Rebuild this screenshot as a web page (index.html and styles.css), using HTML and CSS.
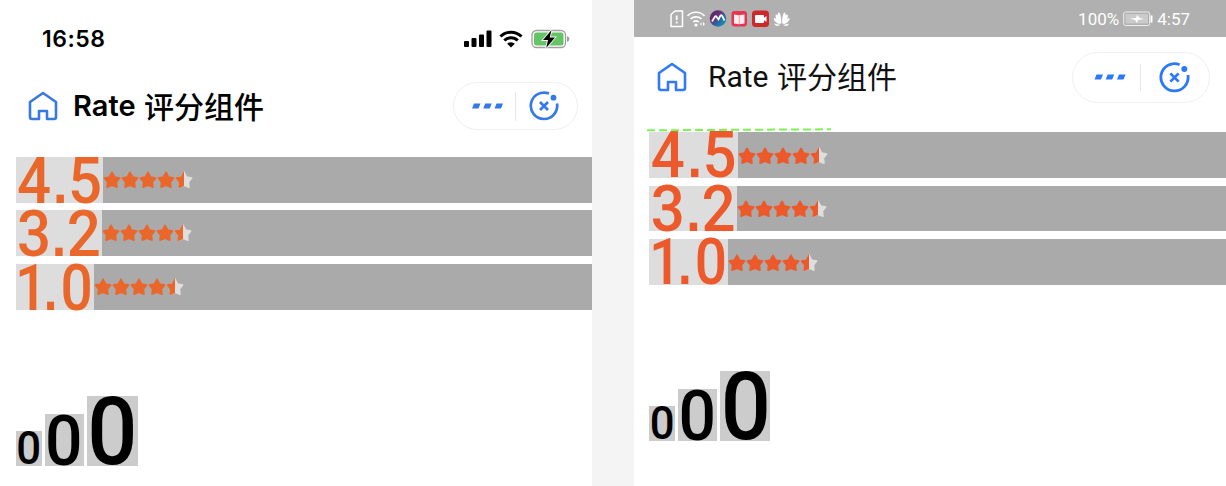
FILE: index.html
```html
<!DOCTYPE html>
<html lang="zh-CN">
<head>
<meta charset="utf-8">
<title>Rate 评分组件</title>
<link rel="stylesheet" href="styles.css">
</head>
<body>
<svg class="defs" aria-hidden="true">
  <defs>
    <symbol id="home" viewBox="0 0 30 30"><path d="M2 11 15 2l13 9V26q0 2-2 2h-7v-8h-8v8H4q-2 0-2-2z" fill="none" stroke="currentColor" stroke-width="2.600" stroke-linejoin="round"/></symbol>
    <symbol id="dots" viewBox="0 0 31 6"><path d="M2 .5h6.500l-2 5H0zM13.200 .5h6.500l-2 5h-6.500zM24.500 .5H31l-2 5h-6.500z" fill="currentColor"/></symbol>
    <symbol id="close" viewBox="0 0 30 30"><path d="M20 2.600A13.200 13.200 0 1 0 28 12.500M11 11l8 8M19 11l-8 8" fill="none" stroke="currentColor" stroke-width="2.700"/><circle cx="24.500" cy="6.700" r="2.900" fill="currentColor"/></symbol>
    <path id="star" d="M9 1.200 11.700 6 16.700 7 13.500 11 14 16.300 9 14.300 4 16.300 4.500 11 1.300 7 6.300 6z" stroke-width="1.500" stroke-linejoin="round"/>
    <clipPath id="half"><rect x="-1" y="-1" width="10" height="20"/></clipPath>
    <symbol id="stars" viewBox="0 0 90 18">
      <g fill="currentColor" stroke="currentColor"><use href="#star"/><use href="#star" x="18"/><use href="#star" x="36"/><use href="#star" x="54"/></g>
      <g transform="translate(72 0)"><use href="#star" fill="#dedede" stroke="#dedede"/><use href="#star" fill="currentColor" stroke="currentColor" clip-path="url(#half)"/></g>
    </symbol>
  </defs>
</svg>
<main class="compare">
  <section class="phone ios">
    <div class="status">
      <span class="time">16:58</span>
      <svg class="signal" viewBox="0 0 28 18"><rect y="11" width="5" height="6" rx="1"/><rect x="7.500" y="8" width="5" height="9" rx="1"/><rect x="15" y="4.500" width="5" height="12.500" rx="1"/><rect x="22.500" y=".5" width="5" height="16.500" rx="1"/></svg>
      <svg class="wifi" viewBox="0 0 24 18"><path d="M1.500 6.500a15 15 0 0 1 21 0M5.300 10.500a9.500 9.500 0 0 1 13.400 0" fill="none" stroke="#000" stroke-width="3.100"/><path d="M12 17.500 8.200 13.700a5.400 5.400 0 0 1 7.600 0z"/></svg>
      <svg class="battery" viewBox="0 0 39 20"><rect x="1" y="1.500" width="33.500" height="17" rx="4.500" fill="#fff" stroke="#a0a0a0" stroke-width="1.300"/><rect x="3" y="3.500" width="29.500" height="13" rx="2.500" fill="#65c466"/><path d="M36 7q2.500 1 2.500 3T36 13z" fill="#a0a0a0"/><path d="m20.500 1-8.500 10h5l-1.800 8L24 8.500h-5.200z" stroke="#fff" stroke-width="1.800" paint-order="stroke"/></svg>
    </div>
    <header class="bar">
      <svg class="home"><use href="#home"/></svg>
      <h1 class="title"><span class="latin">Rate</span><span class="han">评分组件</span></h1>
      <div class="capsule"><svg class="dots"><use href="#dots"/></svg><i class="divider"></i><svg class="close"><use href="#close"/></svg></div>
    </header>
    <div class="rates">
      <div class="rate"><svg class="score s45"><text transform="scale(.93 1)" x="1 39.800 56" y="45.500">4<tspan class="point">.</tspan>5</text></svg><svg class="stars"><use href="#stars"/></svg></div>
      <div class="rate"><svg class="score s32"><text transform="scale(.93 1)" x="1 38.500 54.500" y="45.500">3<tspan class="point">.</tspan>2</text></svg><svg class="stars"><use href="#stars"/></svg></div>
      <div class="rate"><svg class="score s10"><text transform="scale(.88 1)" x="-1 31.500 50.500" y="45.500">1<tspan class="point">.</tspan>0</text></svg><svg class="stars"><use href="#stars"/></svg></div>
    </div>
    <div class="zeros">
      <svg class="zero small"><text transform="scale(.93 1)" x="13.700" y="33">0</text></svg>
      <svg class="zero medium"><text transform="scale(.93 1)" x="20.200" y="51">0</text></svg>
      <svg class="zero large"><text transform="scale(.93 1)" x="27.200" y="68">0</text></svg>
    </div>
  </section>
  <section class="phone android">
    <div class="status">
      <svg class="notices" viewBox="0 0 124 20">
        <g fill="none" stroke="#fff"><path d="M2 5.500 6 2h7.500v15.500H2z" stroke-width="1.500" stroke-linejoin="round"/><path d="M7.700 6.500v4.500M7.700 12.500v2" stroke-width="1.800"/><path d="M18.500 6.800a12 12 0 0 1 17 0M21.500 10a8 8 0 0 1 11 0M24.300 13a4 4 0 0 1 5.400 0" stroke-width="1.700"/></g>
        <circle cx="27" cy="16" r="1.600" fill="#fff"/><path d="m32.500 13-1.500 2 1.500 2zm1.500 0 2 2-2 2z" fill="#fff"/>
        <linearGradient id="orb" x2="1" y2="1"><stop stop-color="#3f256c"/><stop offset=".4" stop-color="#703074"/><stop offset=".6" stop-color="#2866a5"/><stop offset="1" stop-color="#18a5b4"/></linearGradient>
        <circle cx="49" cy="9.500" r="8.300" fill="url(#orb)"/><path d="m43 12.500 3-5q1-1 2 1l1.500 2 2-4q1-1 2 1l2 4" fill="none" stroke="#fff" stroke-width="1.700"/>
        <rect x="62.500" y="2" width="15.500" height="15.500" rx="3" fill="#e73451"/><path d="m65 5.500 5 .8 5.500-.8v9l-5.500.7-5-.7z" fill="#ffecee"/><path d="M70.300 6v9" stroke="#e994a0" stroke-width=".8"/>
        <rect x="83" y="1.500" width="17" height="16.500" rx="3.500" fill="#cf2828"/><rect x="86" y="6" width="9" height="8" rx="1" fill="#fff"/><path d="m94 9.500 3.500-2.500v6L94 10.500z" fill="#fff"/>
        <g fill="#fff" transform="translate(112.700 16)"><path d="M-.4-1Q-5.500-8-3.500-12.500-.2-13-.4-1zM.4-1Q5.500-8 3.500-12.500.2-13 .4-1zM-1-.7Q-7-5-6-10.500-3-11-1-.7zM1-.7Q7-5 6-10.500 3-11 1-.7zM-1.500-.4Q-8-3-8-7-5-7.500-1.500-.4zM1.500-.4Q8-3 8-7 5-7.500 1.500-.4zM-1.500 0Q-6 2.500-7.500-1.500zM1.500 0Q6 2.500 7.500-1.500z"/></g>
      </svg>
      <span class="percent">100%</span>
      <svg class="battery" viewBox="0 0 30 16"><rect x=".7" y="1" width="26" height="13.500" rx="2" fill="#b0b0b0" stroke="#eee" stroke-width="1"/><rect x="2.500" y="3" width="22.500" height="9.500" fill="#cacaca"/><path d="m7 7.500 6-.5 1-3 3 3 4 1-6 1-1 3-2-3z" fill="#fff"/><path d="M28.500 4.500v7" stroke="#fff" stroke-width="2"/></svg>
      <span class="time">4:57</span>
    </div>
    <header class="bar">
      <svg class="home"><use href="#home"/></svg>
      <h1 class="title"><span class="latin">Rate</span><span class="han">评分组件</span></h1>
      <div class="capsule"><svg class="dots"><use href="#dots"/></svg><i class="divider"></i><svg class="close"><use href="#close"/></svg></div>
    </header>
    <div class="rates">
      <svg class="guide" viewBox="0 0 184 4"><path d="M0 2.300 184 1.300" stroke="#79f452" stroke-width="2" stroke-dasharray="8 4"/></svg>
      <div class="rate"><svg class="score s45"><text transform="scale(.93 1)" x="2 41.300 57.500" y="44.700">4<tspan class="point">.</tspan>5</text></svg><svg class="stars"><use href="#stars"/></svg></div>
      <div class="rate"><svg class="score s32"><text transform="scale(.93 1)" x="2 40 56.500" y="44.700">3<tspan class="point">.</tspan>2</text></svg><svg class="stars"><use href="#stars"/></svg></div>
      <div class="rate"><svg class="score s10"><text transform="scale(.88 1)" x="0 33 52" y="44.700">1<tspan class="point">.</tspan>0</text></svg><svg class="stars"><use href="#stars"/></svg></div>
    </div>
    <div class="zeros">
      <svg class="zero small"><text transform="scale(.93 1)" x="14.200" y="32.500">0</text></svg>
      <svg class="zero medium"><text transform="scale(.93 1)" x="20.700" y="50.500">0</text></svg>
      <svg class="zero large"><text transform="scale(.93 1)" x="27.700" y="67.500">0</text></svg>
    </div>
  </section>
</main>
</body>
</html>
```
FILE: styles.css
```css
* { box-sizing: border-box; }
body { margin: 0; background: #f4f4f4; }
svg { display: block; flex: none; }
.defs { position: absolute; width: 0; height: 0; }
.compare { display: flex; justify-content: space-between; width: 1226px; height: 486px; overflow: hidden; }
.phone { width: 592px; height: 486px; background: #fff; overflow: hidden; }
.status, .bar, .capsule, .rate { display: flex; align-items: center; }

.ios .status { height: 78px; padding: 0 22px 0 42px; }
.ios .time { flex: 1; font: 600 23px/1 Inter, sans-serif; letter-spacing: .5px; }
.signal { width: 28px; height: 18px; }
.wifi { width: 24px; height: 18px; margin: 0 8px 0 7px; }
.ios .battery { width: 39px; height: 20px; }
.ios .bar { height: 56px; padding: 0 14px 0 28px; }

.home { width: 30px; height: 30px; color: #3779df; }
.title { display: flex; align-items: center; flex: 1; margin: 0; line-height: 40px; }
.ios .title { padding-left: 15px; color: #000; font-weight: 600; }
.ios .latin { width: 71px; font: 600 29px/40px Inter, sans-serif; }
.han { padding-bottom: 3px; font: 500 30px/40px "Noto Sans CJK SC", sans-serif; }
.capsule { border: 1px solid #efefef; border-radius: 30px; color: #3579e9; }
.divider { background: #e8e8e8; width: 1px; }
.ios .capsule { width: 125px; height: 48px; padding-left: 18px; }
.ios .divider { height: 29px; margin: 0 13px 0 12px; }
.dots { width: 31px; height: 6px; }
.close { width: 30px; height: 30px; }

.rates { position: relative; display: grid; gap: 7.750px; }
.rate { height: 46px; background: #aaa; }
.score { height: 46px; background: #ddd; overflow: visible; font: 500 64.500px Roboto, sans-serif; fill: currentColor; }
.point { font: 700 56px "Liberation Sans", sans-serif; }
.s45 { width: 87px; }
.s32 { width: 85.500px; }
.s10 { width: 78px; }
.stars { width: 90px; height: 18px; }
.ios .rates { margin: 22.500px 0 0 16px; color: #ea672b; }

.zeros { display: flex; align-items: flex-end; gap: 3.500px; }
.zero { background: #ccc; overflow: visible; font-family: Roboto, sans-serif; font-weight: 500; text-anchor: middle; }
.small { width: 25.500px; height: 34.500px; font-size: 47px; }
.medium { width: 38.500px; height: 52px; font-size: 71px; }
.large { width: 51px; height: 69.500px; font-size: 95px; }
.ios .zeros { margin: 86px 0 0 16px; }

.android .status { height: 37px; padding: 0 36px 0 35px; background: #b0b0b0; color: #fff; font: 17px/20px Roboto, sans-serif; }
.notices { width: 124px; height: 20px; }
.percent { margin-left: auto; }
.android .battery { width: 30px; height: 16px; margin: 0 4px; }
.android .bar { height: 80px; padding: 0 16px 0 23px; }
.android .home { color: #3179fa; }
.android .title { padding-left: 21px; color: #111; font-weight: 400; }
.android .latin { width: 69px; font: 400 30px/40px Roboto, sans-serif; }
.android .han { padding-bottom: 4px; font-weight: 400; }
.android .capsule { width: 138px; height: 51px; padding-left: 21px; color: #2b78fa; }
.android .divider { height: 27px; margin: 0 18px 0 14px; }
.android .dots { width: 32px; }
.android .close { width: 31px; height: 31px; }
.android .rates { gap: 8px; margin: 15px 0 0 15px; color: #ec592a; }
.android .s45 { width: 89px; }
.android .s32 { width: 87.500px; }
.android .s10 { width: 79px; }
.android .rate, .android .score { height: 45.600px; }
.android .stars { margin-top: 2px; }
.guide { position: absolute; z-index: 1; left: -2px; top: -4px; width: 184px; height: 4px; }
.android .zeros { margin: 86.700px 0 0 15px; }
.android .large { width: 50px; }
```
